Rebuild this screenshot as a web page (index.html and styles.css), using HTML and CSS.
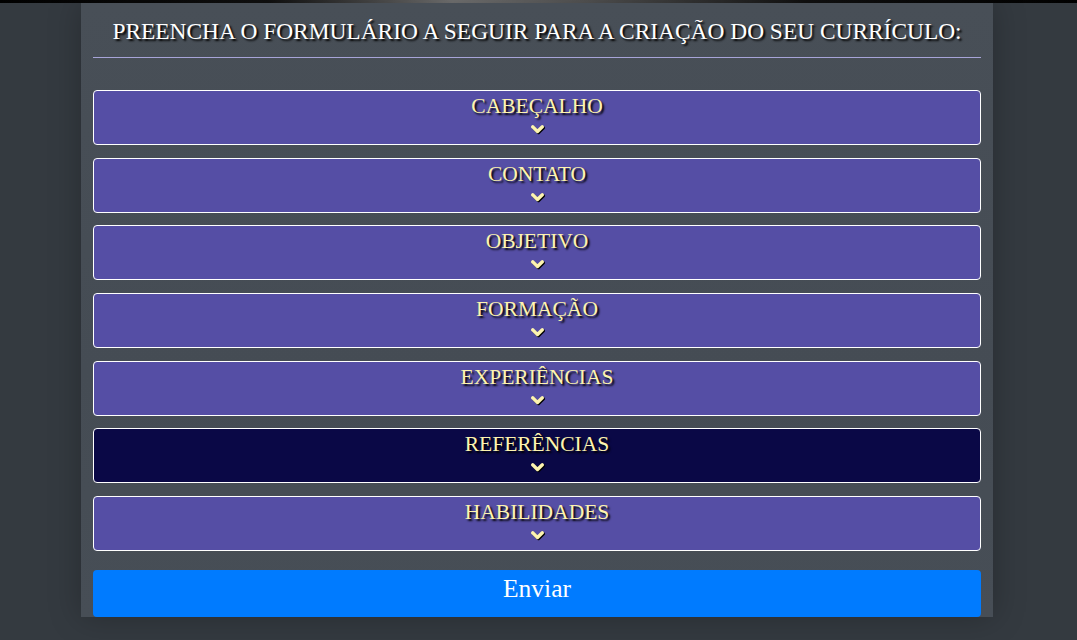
FILE: index.html
```html
<!DOCTYPE html>
<html lang="pt-BR">
<head>
<meta charset="utf-8">
<title>Currículo</title>
<link rel="stylesheet" href="styles.css">
</head>
<body>
<div class="topbar"></div>
<main class="container">
  <h1 class="title">PREENCHA O FORMULÁRIO A SEGUIR PARA A CRIAÇÃO DO SEU CURRÍCULO:</h1>
  <hr class="divider">
  <form class="form">
    <div class="sections">
      <button type="button" class="section"><span class="label">CABEÇALHO</span><svg class="chev" viewBox="0 0 14 10"><path d="M2.5 2.5 L7 6.8 L11.5 2.5"/></svg></button>
      <button type="button" class="section"><span class="label">CONTATO</span><svg class="chev" viewBox="0 0 14 10"><path d="M2.5 2.5 L7 6.8 L11.5 2.5"/></svg></button>
      <button type="button" class="section"><span class="label">OBJETIVO</span><svg class="chev" viewBox="0 0 14 10"><path d="M2.5 2.5 L7 6.8 L11.5 2.5"/></svg></button>
      <button type="button" class="section"><span class="label">FORMAÇÃO</span><svg class="chev" viewBox="0 0 14 10"><path d="M2.5 2.5 L7 6.8 L11.5 2.5"/></svg></button>
      <button type="button" class="section"><span class="label">EXPERIÊNCIAS</span><svg class="chev" viewBox="0 0 14 10"><path d="M2.5 2.5 L7 6.8 L11.5 2.5"/></svg></button>
      <button type="button" class="section active"><span class="label">REFERÊNCIAS</span><svg class="chev" viewBox="0 0 14 10"><path d="M2.5 2.5 L7 6.8 L11.5 2.5"/></svg></button>
      <button type="button" class="section"><span class="label">HABILIDADES</span><svg class="chev" viewBox="0 0 14 10"><path d="M2.5 2.5 L7 6.8 L11.5 2.5"/></svg></button>
    </div>
    <button type="submit" class="submit">Enviar</button>
  </form>
</main>
</body>
</html>
```
FILE: styles.css
```css
html, body {
  margin: 0;
  padding: 0;
  height: 100%;
}
body {
  background: #343a40;
  font-family: "Liberation Serif", "Times New Roman", serif;
  overflow: hidden;
}
.topbar {
  height: 3px;
  background: linear-gradient(90deg, #000 0%, #111 25%, #777 42%, #555 55%, #111 75%, #000 100%);
}
.container {
  width: 912px;
  margin-left: 81px;
  background: linear-gradient(180deg, #484f57 0%, #454c54 60%, #474e56 100%);
  box-shadow: 0 0 30px rgba(0,0,0,0.25);
  padding: 0 12px 0 12px;
  box-sizing: border-box;
  height: 614px;
  display: flex;
  flex-direction: column;
}
.title {
  margin: 14px 0 0 0;
  font-weight: normal;
  font-size: 23.4px;
  line-height: 28px;
  color: #fff;
  text-align: center;
  text-shadow: 2px 2px 2px #000;
  letter-spacing: 0;
}
.divider {
  margin: 12px 0 0 0;
  border: 0;
  border-top: 1px solid #a7a4d8;
  height: 0;
}
.form {
  display: flex;
  flex-direction: column;
  margin-top: 32px;
}
.sections {
  display: flex;
  flex-direction: column;
  gap: 12.7px;
}
.section {
  height: 55px;
  background: #554ea5;
  border: 1px solid #fff;
  border-radius: 4px;
  display: flex;
  flex-direction: column;
  align-items: center;
  justify-content: flex-start;
  padding: 3px 0 0 0;
  font-family: inherit;
  cursor: pointer;
}
.section.active {
  background: #0a0846;
}
.label {
  font-size: 21.5px;
  line-height: 24px;
  color: #fdf4b0;
  text-shadow: 2px 2px 2px #000;
}
.chev {
  width: 15px;
  height: 11px;
  margin-top: 6px;
  filter: drop-shadow(1.5px 1.5px 0.5px #000);
}
.chev path {
  fill: none;
  stroke: #fdf4b0;
  stroke-width: 3.2;
  stroke-linecap: round;
  stroke-linejoin: round;
}
.submit {
  margin-top: 19px;
  height: 47px;
  background: #007bff;
  border: 0;
  border-radius: 4px;
  color: #fff;
  font-family: inherit;
  font-size: 25.5px;
  cursor: pointer;
  padding: 0 0 9px 0;
}
```
